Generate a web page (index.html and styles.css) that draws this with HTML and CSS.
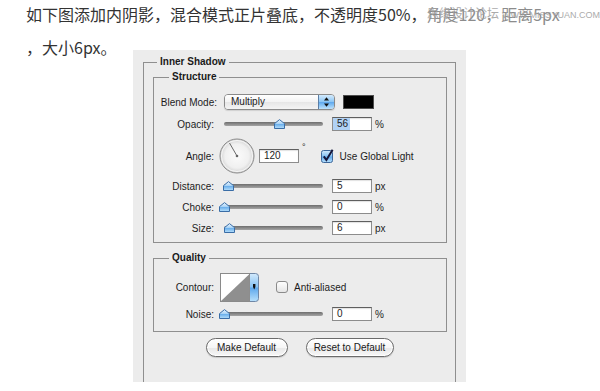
FILE: index.html
```html
<!DOCTYPE html>
<html lang="zh-CN">
<head>
<meta charset="utf-8">
<title>Inner Shadow</title>
<link rel="stylesheet" href="styles.css">
</head>
<body>
<div class="intro">
  <div class="intro-line first">如下图添加内阴影，混合模式正片叠底，不透明度50%，<span class="faded">角度120，距离5px</span></div>
  <div class="intro-line">，大小6px。</div>
  <div class="watermark"><span class="wm-cn">思缘设计论坛</span><span class="wm-en">WWW.MISSYUAN.COM</span></div>
</div>

<div class="panel">
  <fieldset class="group outer">
    <legend>Inner Shadow</legend>

    <fieldset class="group structure">
      <legend>Structure</legend>

      <div class="row row-blend">
        <span class="label">Blend Mode:</span>
        <div class="select">
          <span class="select-text">Multiply</span>
          <span class="select-btn">
            <svg width="15" height="14" viewBox="0 0 15 14"><path d="M7.5 2.2 L10 5.6 H5Z" fill="#111"/><path d="M7.5 11.8 L10 8.4 H5Z" fill="#111"/></svg>
          </span>
        </div>
        <span class="swatch"></span>
      </div>

      <div class="row row-slider">
        <span class="label">Opacity:</span>
        <div class="slider">
          <svg class="thumb" style="left:56%" width="11" height="10" viewBox="0 0 11 10"><path d="M5.5 .6 L10.5 4.6 V9.5 H.5 V4.6Z" fill="url(#thumbg)" stroke="#3a6da6"/></svg>
        </div>
        <span class="field field-sel"><span class="sel">56</span></span>
        <span class="unit">%</span>
      </div>

      <div class="row row-angle">
        <span class="label">Angle:</span>
        <svg class="dial" width="36" height="36" viewBox="0 0 36 36">
          <circle cx="18" cy="18" r="17" fill="url(#dialg)" stroke="#8c8c8c"/>
          <circle cx="18" cy="18" r="15.6" fill="none" stroke="#ffffff" stroke-opacity=".7"/>
          <line x1="18" y1="18" x2="10.5" y2="5" stroke="#6a6a6a" stroke-width="1"/>
          <circle cx="18" cy="18" r="1.3" fill="#666"/>
        </svg>
        <span class="field field-angle">120</span>
        <span class="deg">°</span>
        <svg class="check" width="13" height="14" viewBox="0 0 13 14">
          <rect x=".5" y="1.5" width="11" height="12" rx="2" fill="url(#aquag)" stroke="#3d679a"/>
          <path d="M2.8 7.4 L5.4 11 L11.6 .8" fill="none" stroke="#15163a" stroke-width="2"/>
        </svg>
        <span class="check-label">Use Global Light</span>
      </div>

      <div class="row row-slider row-gap-s">
        <span class="label">Distance:</span>
        <div class="slider">
          <svg class="thumb" style="left:4%" width="11" height="10" viewBox="0 0 11 10"><path d="M5.5 .6 L10.5 4.6 V9.5 H.5 V4.6Z" fill="url(#thumbg)" stroke="#3a6da6"/></svg>
        </div>
        <span class="field">5</span>
        <span class="unit">px</span>
      </div>

      <div class="row row-slider">
        <span class="label">Choke:</span>
        <div class="slider">
          <svg class="thumb" style="left:0%" width="11" height="10" viewBox="0 0 11 10"><path d="M5.5 .6 L10.5 4.6 V9.5 H.5 V4.6Z" fill="url(#thumbg)" stroke="#3a6da6"/></svg>
        </div>
        <span class="field">0</span>
        <span class="unit">%</span>
      </div>

      <div class="row row-slider">
        <span class="label">Size:</span>
        <div class="slider">
          <svg class="thumb" style="left:5%" width="11" height="10" viewBox="0 0 11 10"><path d="M5.5 .6 L10.5 4.6 V9.5 H.5 V4.6Z" fill="url(#thumbg)" stroke="#3a6da6"/></svg>
        </div>
        <span class="field">6</span>
        <span class="unit">px</span>
      </div>
    </fieldset>

    <fieldset class="group quality">
      <legend>Quality</legend>

      <div class="row row-contour">
        <span class="label">Contour:</span>
        <svg class="contour" width="39" height="29" viewBox="0 0 39 29">
          <rect x=".5" y=".5" width="38" height="28" rx="3" fill="url(#aquag)" stroke="#6f87a6"/>
          <rect x=".5" y=".5" width="29" height="28" fill="#ffffff" stroke="#8a8a8a"/>
          <polygon points="1,28 29.5,1 29.5,28" fill="#8f8f8f"/>
          <path d="M33 11 H35.4 V14 L34.2 16.6 L33 14Z" fill="#111"/>
        </svg>
        <svg class="check check-off" width="13" height="13" viewBox="0 0 13 13">
          <rect x=".5" y=".5" width="11" height="11" rx="2.5" fill="url(#offg)" stroke="#8a8a8a"/>
        </svg>
        <span class="check-label">Anti-aliased</span>
      </div>

      <div class="row row-slider row-gap-s">
        <span class="label">Noise:</span>
        <div class="slider">
          <svg class="thumb" style="left:0%" width="11" height="10" viewBox="0 0 11 10"><path d="M5.5 .6 L10.5 4.6 V9.5 H.5 V4.6Z" fill="url(#thumbg)" stroke="#3a6da6"/></svg>
        </div>
        <span class="field">0</span>
        <span class="unit">%</span>
      </div>
    </fieldset>

    <div class="buttons">
      <button class="btn btn-make" type="button">Make Default</button>
      <button class="btn btn-reset" type="button">Reset to Default</button>
    </div>
  </fieldset>
</div>

<svg class="defs" width="0" height="0" aria-hidden="true">
  <defs>
    <linearGradient id="thumbg" x1="0" y1="0" x2="0" y2="1">
      <stop offset="0" stop-color="#eef7ff"/>
      <stop offset=".45" stop-color="#a9d3f6"/>
      <stop offset=".55" stop-color="#6eb1ec"/>
      <stop offset="1" stop-color="#b8e0fb"/>
    </linearGradient>
    <linearGradient id="aquag" x1="0" y1="0" x2="0" y2="1">
      <stop offset="0" stop-color="#d3eafc"/>
      <stop offset=".48" stop-color="#86c2f3"/>
      <stop offset=".52" stop-color="#5ea8ec"/>
      <stop offset="1" stop-color="#b9e1fc"/>
    </linearGradient>
    <linearGradient id="offg" x1="0" y1="0" x2="0" y2="1">
      <stop offset="0" stop-color="#ffffff"/>
      <stop offset="1" stop-color="#e4e4e4"/>
    </linearGradient>
    <radialGradient id="dialg" cx=".5" cy=".5" r=".5">
      <stop offset="0" stop-color="#fbfbfb"/>
      <stop offset=".7" stop-color="#f0f0f0"/>
      <stop offset="1" stop-color="#d2d2d2"/>
    </radialGradient>
  </defs>
</svg>
</body>
</html>
```
FILE: styles.css
```css
* { box-sizing: border-box; }

html, body {
  margin: 0;
  padding: 0;
  background: #ffffff;
}

body {
  width: 600px;
  height: 391px;
  overflow: hidden;
}

/* ---------- intro text ---------- */
.intro {
  position: relative;
  height: 52px;
  padding-left: 26px;
  font-family: "Noto Sans CJK SC", "Noto Sans", sans-serif;
  font-size: 16px;
  line-height: 33px;
  color: #333333;
}

.intro-line {
  white-space: nowrap;
}

.intro-line.first {
  margin-top: -2px;
}

.faded {
  color: #8c8c8c;
}

.watermark {
  position: absolute;
  left: 427px;
  top: 7px;
  display: flex;
  align-items: baseline;
  gap: 3px;
  color: #a3a3a3;
  white-space: nowrap;
  line-height: 16px;
  opacity: .9;
}

.wm-cn {
  font-size: 12px;
}

.wm-en {
  font-family: "Liberation Sans", Arial, sans-serif;
  font-size: 9px;
  letter-spacing: 0;
}

/* ---------- panel ---------- */
.panel {
  margin-left: 133px;
  width: 333px;
  height: 332px;
  overflow: hidden;
  background: #ececec;
  padding: 6px 10px 0;
  font-family: "Lucida Grande", "Liberation Sans", Arial, sans-serif;
  font-size: 10px;
  color: #1c1c1c;
}

.group {
  margin: 0;
  padding: 0;
  min-width: 0;
  border: 1px solid #8f8f8f;
}

.group > legend {
  margin-left: 13px;
  padding: 0 3px;
  font-weight: bold;
  font-size: 10px;
  line-height: 12px;
  color: #1a1a1a;
}

.outer {
  height: 360px;
}

.structure {
  margin: 3px 8px 0 9px;
  padding: 11px 0 7px;
}

.structure > legend,
.quality > legend {
  margin-left: 15px;
}

.quality {
  margin: 9px 8px 0 9px;
  padding: 9px 0 10px;
}

/* ---------- rows ---------- */
.row {
  display: flex;
  align-items: center;
}

.label {
  flex: none;
  width: 60px;
  text-align: right;
  white-space: nowrap;
}

.row-blend {
  height: 16px;
}

.row-blend .label {
  width: 63px;
}

.row-slider {
  height: 14px;
  margin-top: 7px;
}

.row-slider.row-gap-s {
  margin-top: 5px;
}

.row-angle {
  height: 36px;
  margin-top: 7px;
}

.row-contour {
  height: 29px;
}

/* select */
.select {
  flex: none;
  display: flex;
  margin-left: 7px;
  width: 111px;
  height: 16px;
  border: 1px solid #8a8a8a;
  border-radius: 4px;
  overflow: hidden;
  box-shadow: 0 1px 1px rgba(0, 0, 0, .12);
}

.select-text {
  flex: 1;
  padding-left: 6px;
  line-height: 14px;
  background: linear-gradient(#ffffff, #f3f3f3 50%, #e6e6e6 51%, #f4f4f4);
}

.select-btn {
  flex: none;
  width: 16px;
  display: flex;
  align-items: center;
  justify-content: center;
  border-left: 1px solid #5b7ea6;
  background: linear-gradient(#d4ebfd, #8cc6f4 48%, #5fa9ee 52%, #bfe3fc);
}

.swatch {
  flex: none;
  margin-left: 8px;
  width: 31px;
  height: 14px;
  background: #000000;
  border: 1px solid #4d4d4d;
}

/* slider */
.slider {
  flex: none;
  position: relative;
  margin-left: 10px;
  width: 99px;
  height: 4px;
  border-radius: 2px;
  background: linear-gradient(#6e6e6e, #a5a5a5);
}

.thumb {
  position: absolute;
  top: -3px;
  margin-left: -5px;
  display: block;
}

/* field */
.field {
  flex: none;
  margin-left: 9px;
  width: 40px;
  height: 14px;
  padding-left: 4px;
  background: #ffffff;
  border: 1px solid #8c8c8c;
  border-top-color: #5f5f5f;
  line-height: 12px;
  box-shadow: inset 0 1px 1px rgba(0, 0, 0, .12);
}

.field-sel {
  padding-left: 0;
}

.sel {
  display: inline-block;
  height: 12px;
  padding: 0 2px 0 4px;
  background: #b1d2f5;
}

.unit {
  margin-left: 3px;
}

/* angle */
.dial {
  flex: none;
  margin-left: 5px;
  display: block;
}

.field-angle {
  margin-left: 4px;
}

.deg {
  align-self: flex-start;
  margin-top: 5px;
  margin-left: 3px;
  font-size: 9px;
  line-height: 9px;
}

.check {
  flex: none;
  display: block;
  margin-left: 15px;
}

.check-label {
  margin-left: 6px;
  white-space: nowrap;
}

/* contour */
.contour {
  flex: none;
  display: block;
  margin-left: 6px;
}

.check-off {
  margin-left: 17px;
}

.check-off + .check-label {
  margin-left: 5px;
}

/* buttons */
.buttons {
  display: flex;
  justify-content: center;
  gap: 18px;
  margin-top: 6px;
}

.btn {
  height: 19px;
  padding: 0;
  border: 1px solid #6b6b6b;
  border-radius: 10px;
  background: linear-gradient(#ffffff, #f6f6f6 50%, #e8e8e8 51%, #f7f7f7);
  box-shadow: inset 0 0 0 1px #ffffff, 0 1px 1px rgba(0, 0, 0, .15);
  font-family: "Lucida Grande", "Liberation Sans", Arial, sans-serif;
  font-size: 10px;
  color: #1a1a1a;
  line-height: 17px;
}

.btn-make {
  width: 82px;
}

.btn-reset {
  width: 88px;
}

.defs {
  display: block;
  width: 0;
  height: 0;
  overflow: hidden;
}
```
